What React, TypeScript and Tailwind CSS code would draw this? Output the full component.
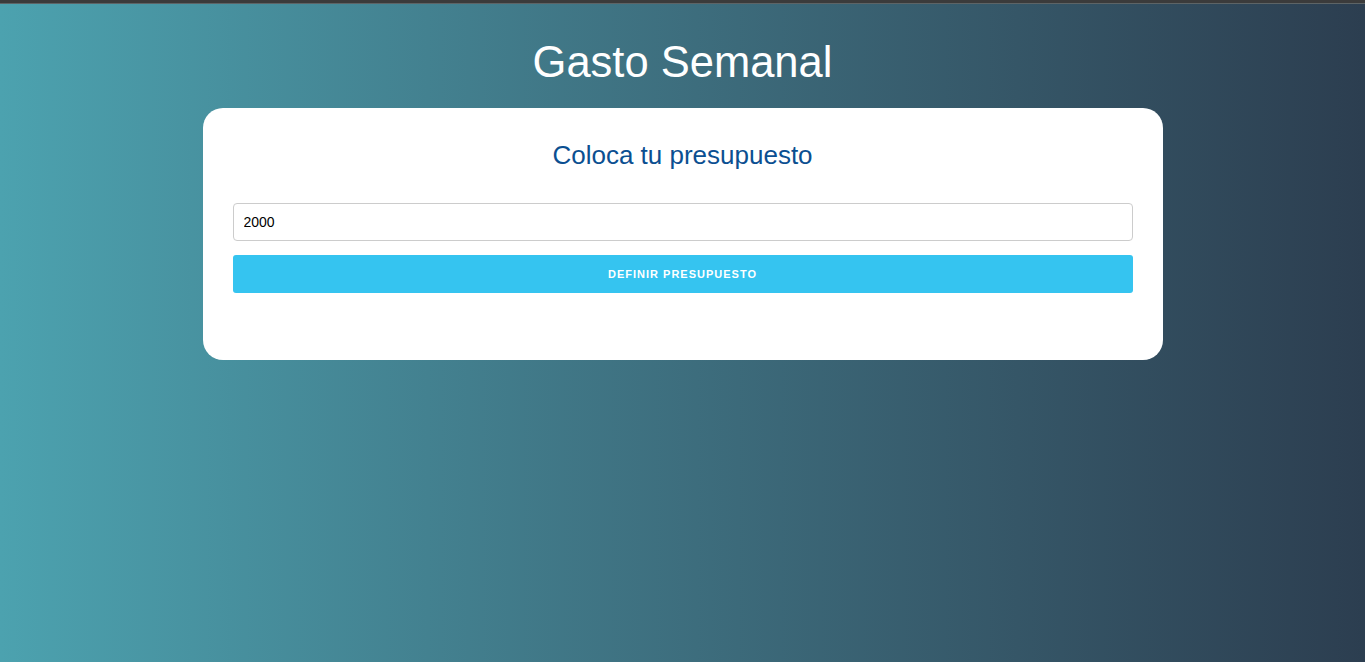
import { useState } from "react";

export default function App() {
  const [budget, setBudget] = useState("2000");

  return (
    <div className="min-h-[662px] bg-gradient-to-r from-[#4ca2af] to-[#2c3e50] font-['Liberation_Sans',Arial,sans-serif]">
      <div className="h-[3px] bg-[#3b3b3b]" />
      <div className="h-px bg-[#5d6466]" />

      <header className="pt-[33px] pb-[21px] text-center">
        <h1 className="text-[43.5px] leading-[50px] font-normal text-white">Gasto Semanal</h1>
      </header>

      <main className="mx-auto w-[960px] rounded-[20px] bg-white px-[30px] pt-[32px] pb-[67px]">
        <h2 className="text-center text-[26px] leading-[30px] text-[#0b4f91]">Coloca tu presupuesto</h2>

        <form className="mt-[33px] flex flex-col gap-[14px]" onSubmit={(e) => e.preventDefault()}>
          <input
            type="number"
            value={budget}
            onChange={(e) => setBudget(e.target.value)}
            className="h-[38px] w-full rounded-[4px] border border-[#cccccc] px-[10px] text-[14px] text-black outline-none"
          />
          <button
            type="submit"
            className="h-[38px] w-full rounded-[3px] bg-[#35c4f0] text-[11px] font-bold uppercase tracking-[1px] text-white"
          >
            Definir presupuesto
          </button>
        </form>
      </main>
    </div>
  );
}
